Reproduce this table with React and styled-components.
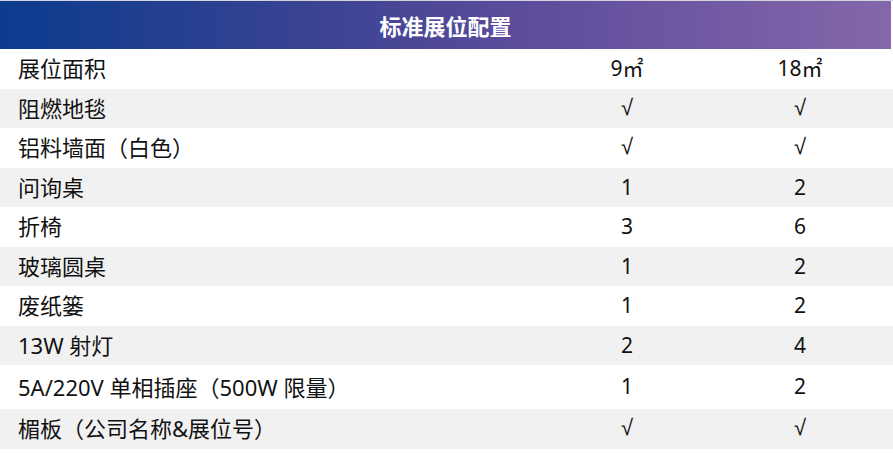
import React from 'react';
import styled, { createGlobalStyle } from 'styled-components';

const GlobalStyle = createGlobalStyle`
  html, body {
    margin: 0;
    padding: 0;
    background: #ffffff;
  }

  body {
    font-family: "Noto Sans", "Noto Sans CJK SC", sans-serif;
    color: #111111;
  }
`;

const rows = [
  { name: '展位面积', small: '9㎡', large: '18㎡' },
  { name: '阻燃地毯', small: '√', large: '√' },
  { name: '铝料墙面（白色）', small: '√', large: '√' },
  { name: '问询桌', small: '1', large: '2' },
  { name: '折椅', small: '3', large: '6' },
  { name: '玻璃圆桌', small: '1', large: '2' },
  { name: '废纸篓', small: '1', large: '2' },
  { name: '13W 射灯', small: '2', large: '4' },
  { name: '5A/220V 单相插座（500W 限量）', small: '1', large: '2', tall: true },
  { name: '楣板（公司名称&展位号）', small: '√', large: '√' },
];

const Cell = ({ value }) =>
  value === '√' ? <Check>√</Check> : <Value>{value}</Value>;

export default function App() {
  return (
    <>
      <GlobalStyle />
      <Table>
        <Header>标准展位配置</Header>
        {rows.map((row, index) => (
          <Row key={row.name} $shaded={index % 2 === 1} $tall={row.tall}>
            <Label>{row.name}</Label>
            <Cell value={row.small} />
            <Cell value={row.large} />
          </Row>
        ))}
      </Table>
    </>
  );
}

const Table = styled.div`
  display: flex;
  flex-direction: column;
  width: 893px;
  border-top: 1px solid #d4d4dc;
`;

const Header = styled.div`
  display: flex;
  align-items: center;
  justify-content: center;
  height: 48px;
  margin-right: 2px;
  background: linear-gradient(90deg, #0b3b8e 0%, #3a4392 35%, #5e4d9c 60%, #8467aa 100%);
  color: #ffffff;
  font-family: "Noto Sans CJK SC", sans-serif;
  font-size: 22px;
  font-weight: 700;
`;

const Row = styled.div`
  display: grid;
  grid-template-columns: 540px 174px 172px 1fr;
  align-items: center;
  height: ${props => (props.$tall ? '44px' : '39.5px')};
  background: ${props => (props.$shaded ? '#f1f1f1' : '#ffffff')};
`;

const Label = styled.span`
  padding-left: 18px;
  font-size: 22px;
  line-height: 1.3;
  white-space: nowrap;
`;

const Value = styled.span`
  text-align: center;
  font-size: 21px;
  line-height: 1.3;
`;

const Check = styled(Value)`
  font-family: "Liberation Sans", sans-serif;
  font-size: 22px;
`;
